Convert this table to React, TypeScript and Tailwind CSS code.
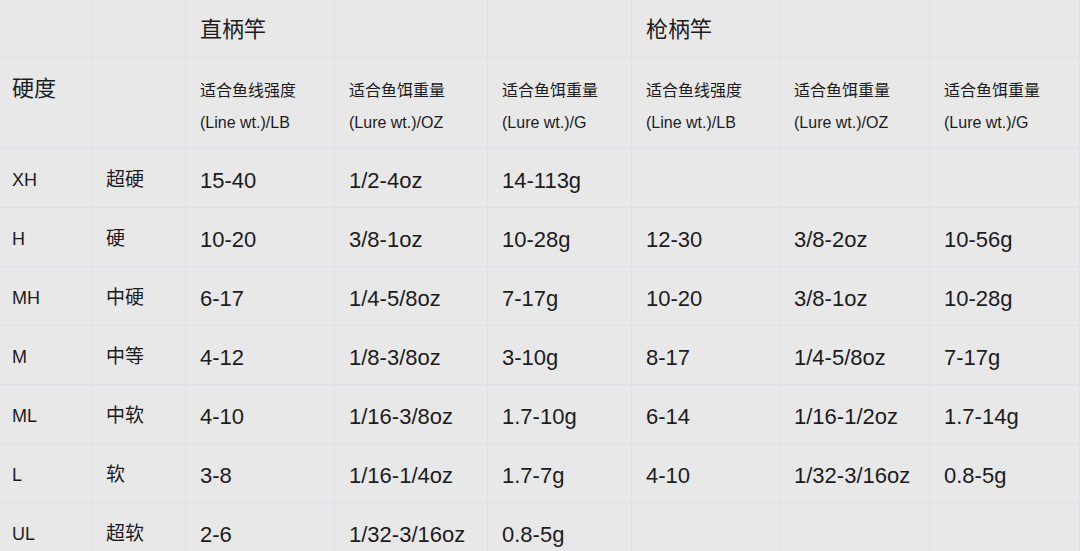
import React from 'react';

const cols = 'grid-cols-[92px_94px_149px_153px_144px_148px_150px_150px]';

const rows: string[][] = [
  ['XH', '超硬', '15-40', '1/2-4oz', '14-113g', '', '', ''],
  ['H', '硬', '10-20', '3/8-1oz', '10-28g', '12-30', '3/8-2oz', '10-56g'],
  ['MH', '中硬', '6-17', '1/4-5/8oz', '7-17g', '10-20', '3/8-1oz', '10-28g'],
  ['M', '中等', '4-12', '1/8-3/8oz', '3-10g', '8-17', '1/4-5/8oz', '7-17g'],
  ['ML', '中软', '4-10', '1/16-3/8oz', '1.7-10g', '6-14', '1/16-1/2oz', '1.7-14g'],
  ['L', '软', '3-8', '1/16-1/4oz', '1.7-7g', '4-10', '1/32-3/16oz', '0.8-5g'],
  ['UL', '超软', '2-6', '1/32-3/16oz', '0.8-5g', '', '', ''],
];

const subHeads: [string, string][] = [
  ['适合鱼线强度', '(Line wt.)/LB'],
  ['适合鱼饵重量', '(Lure wt.)/OZ'],
  ['适合鱼饵重量', '(Lure wt.)/G'],
];

const cell = 'border-r border-b border-[#dfe0ea] flex items-center';

const App: React.FC = () => {
  return (
    <div
      className="w-[1080px] h-[551px] overflow-hidden bg-[#e8e8e8] text-[#1c1c1e]"
      style={{ fontFamily: '"Liberation Sans", Arial, "Noto Sans CJK SC", sans-serif' }}
    >
      {/* header row 1 */}
      <div className={`grid ${cols} h-[58px]`}>
        <div className={cell} />
        <div className={cell} />
        <div className={`${cell} pl-[14px] pt-[2px] text-[22px]`}>直柄竿</div>
        <div className={cell} />
        <div className={cell} />
        <div className={`${cell} pl-[14px] pt-[2px] text-[22px]`}>枪柄竿</div>
        <div className={cell} />
        <div className={cell} />
      </div>

      {/* header row 2 */}
      <div className={`grid ${cols} h-[91px]`}>
        <div className={`${cell} items-start pl-[12px] pt-[14px] text-[22px]`}>硬度</div>
        <div className={cell} />
        {[...subHeads, ...subHeads].map(([zh, en], i) => (
          <div key={i} className={`${cell} flex-col items-start justify-center pl-[14px] pt-[8px] text-[16px] leading-[32px]`}>
            <span>{zh}</span>
            <span>{en}</span>
          </div>
        ))}
      </div>

      {/* data rows */}
      {rows.map((r, ri) => (
        <div key={ri} className={`grid ${cols} h-[59px]`}>
          {r.map((v, ci) => (
            <div
              key={ci}
              className={`${cell} pt-[4px] ${ci === 0 ? 'pl-[12px] text-[18px]' : ci === 1 ? 'pl-[14px] text-[19px]' : 'pl-[14px] text-[22px]'}`}
            >
              {v}
            </div>
          ))}
        </div>
      ))}
    </div>
  );
};

export default App;
